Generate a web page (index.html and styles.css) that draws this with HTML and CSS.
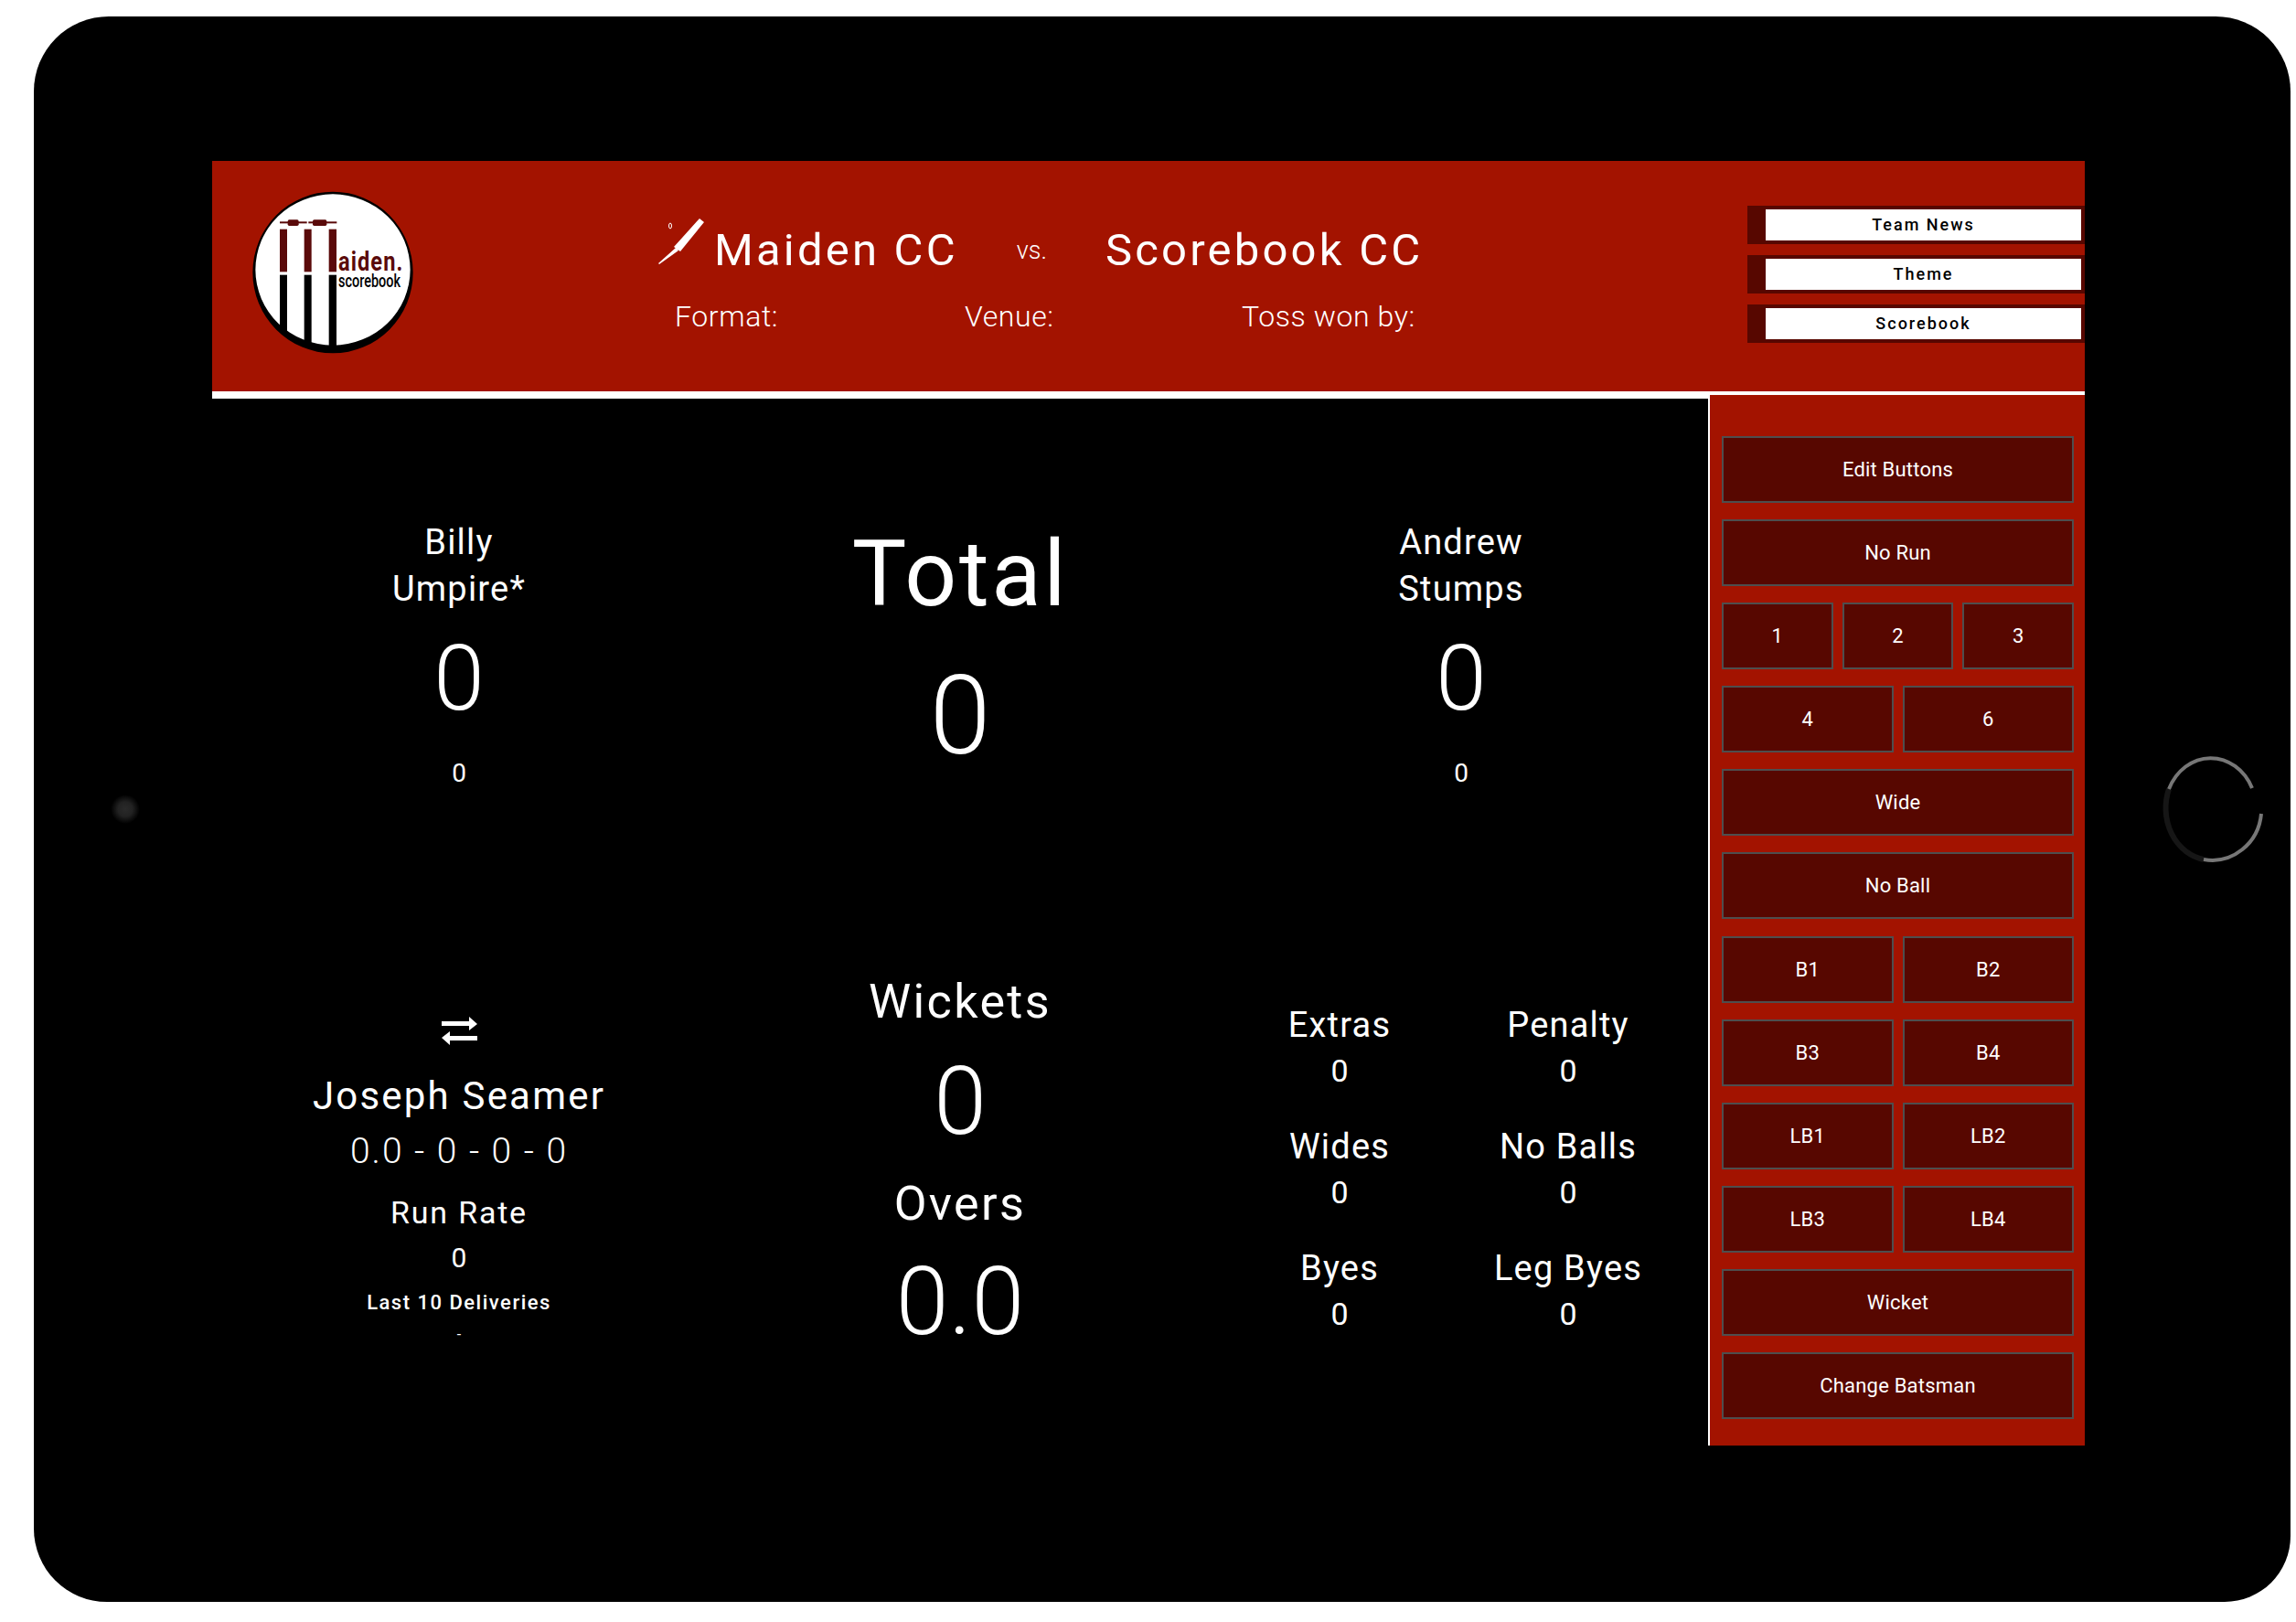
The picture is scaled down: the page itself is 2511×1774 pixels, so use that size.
FILE: index.html

```html
<!DOCTYPE HTML>
<html>
<head>
<meta charset="utf-8">
<title>Maiden Scorebook</title>
<link rel="stylesheet" href="styles.css">
</head>

<body>
<div class="tablet">
	<span class="camera"></span>
	<svg class="home" width="120" height="120" viewBox="0 0 120 120">
		<path class="home-faint" d="M14 36 A50 57 0 0 0 52 113" />
		<path d="M14 36 A50 57 0 0 1 105 35" />
		<path d="M52 113 A54 56 0 0 0 115 63" />
	</svg>

	<div class="app">
		<header class="top">
			<!-- logo -->
			<svg class="logo" width="176" height="178" viewBox="48 30 524 534">
				<circle cx="310" cy="294" r="258" fill="#fff" />
				<path d="M310 32 A260 262 0 0 1 310 562 A260 262 0 0 1 310 32 Z M310 40 A254 248 0 0 0 310 536 A254 248 0 0 0 310 40 Z" fill="#000" fill-rule="evenodd" />
				<g fill="#5a0a0a">
					<rect x="136" y="155" width="24" height="140" />
					<rect x="216" y="155" width="24" height="140" />
					<rect x="297" y="155" width="25" height="140" />
					<rect x="136" y="130" width="89" height="6" />
					<rect x="230" y="130" width="93" height="6" />
					<rect x="162" y="124" width="36" height="20" rx="5" />
					<rect x="244" y="124" width="46" height="20" rx="5" />
				</g>
				<g fill="#000">
					<rect x="136" y="305" width="24" height="190" />
					<rect x="216" y="305" width="24" height="235" />
					<rect x="297" y="305" width="25" height="245" />
				</g>
				<text x="328" y="292" textLength="214" lengthAdjust="spacingAndGlyphs" class="logo-name">aiden.</text>
				<text x="328" y="344" textLength="204" lengthAdjust="spacingAndGlyphs" class="logo-sub">scorebook</text>
			</svg>

			<div class="match">
				<div class="teams">
					<svg class="bat" width="50" height="50" viewBox="0 0 50 50">
						<path d="M45 0 L50 4 L24 36 L17 31 Z M19 32 L22 35 L1 50 L0 49 Z" fill="#fff" />
						<ellipse cx="13" cy="8" rx="1.5" ry="3" fill="none" stroke="#fff" stroke-width="1" />
					</svg>
					<span class="team">Maiden CC</span>
					<span class="versus">vs.</span>
					<span class="team">Scorebook CC</span>
				</div>
				<div class="meta">
					<span class="meta-format">Format:</span>
					<span class="meta-venue">Venue:</span>
					<span>Toss won by:</span>
				</div>
			</div>

			<div class="links">
				<a class="link">Team News</a>
				<a class="link">Theme</a>
				<a class="link">Scorebook</a>
			</div>
		</header>

		<div class="body">
			<main class="board">
				<section class="cell batter">
					<div class="batter-name">Billy<br>Umpire*</div>
					<div class="batter-runs">0</div>
					<div class="batter-balls">0</div>
				</section>
				<section class="cell total">
					<div class="total-label">Total</div>
					<div class="total-num">0</div>
				</section>
				<section class="cell batter">
					<div class="batter-name">Andrew<br>Stumps</div>
					<div class="batter-runs">0</div>
					<div class="batter-balls">0</div>
				</section>

				<section class="cell bowler">
					<svg class="swap" width="39" height="31" viewBox="0 0 39 31">
						<path d="M0 5 H30 V0 L39 8 L30 15 V10 H0 Z" fill="#fff" />
						<path d="M39 21 H9 V16 L0 23 L9 31 V26 H39 Z" fill="#fff" />
					</svg>
					<div class="bowler-name">Joseph Seamer</div>
					<div class="bowler-figs">0.0 - 0 - 0 - 0</div>
					<div class="rate-label">Run Rate</div>
					<div class="rate-num">0</div>
					<div class="last-label">Last 10 Deliveries</div>
					<div class="last-list">-</div>
				</section>
				<section class="cell innings">
					<div class="innings-label">Wickets</div>
					<div class="innings-num">0</div>
					<div class="innings-label overs">Overs</div>
					<div class="innings-num overs-num">0.0</div>
				</section>
				<section class="cell extras">
					<div class="extra"><div class="extra-label">Extras</div><div class="extra-num">0</div></div>
					<div class="extra"><div class="extra-label">Penalty</div><div class="extra-num">0</div></div>
					<div class="extra"><div class="extra-label">Wides</div><div class="extra-num">0</div></div>
					<div class="extra"><div class="extra-label">No Balls</div><div class="extra-num">0</div></div>
					<div class="extra"><div class="extra-label">Byes</div><div class="extra-num">0</div></div>
					<div class="extra"><div class="extra-label">Leg Byes</div><div class="extra-num">0</div></div>
				</section>
			</main>

			<aside class="pad">
				<div class="pad-row"><button class="key">Edit Buttons</button></div>
				<div class="pad-row"><button class="key">No Run</button></div>
				<div class="pad-row"><button class="key">1</button><button class="key">2</button><button class="key">3</button></div>
				<div class="pad-row"><button class="key">4</button><button class="key">6</button></div>
				<div class="pad-row"><button class="key">Wide</button></div>
				<div class="pad-row"><button class="key">No Ball</button></div>
				<div class="pad-row"><button class="key">B1</button><button class="key">B2</button></div>
				<div class="pad-row"><button class="key">B3</button><button class="key">B4</button></div>
				<div class="pad-row"><button class="key">LB1</button><button class="key">LB2</button></div>
				<div class="pad-row"><button class="key">LB3</button><button class="key">LB4</button></div>
				<div class="pad-row"><button class="key">Wicket</button></div>
				<div class="pad-row"><button class="key">Change Batsman</button></div>
			</aside>
		</div>
	</div>
</div>
</body>
</html>
```

FILE: styles.css

```css
* {margin:0; padding:0; box-sizing:border-box;}
html, body {background:#fff;}
body {font-family:Roboto, "Liberation Sans", sans-serif; color:#fff;}

.tablet {position:relative; width:2468px; height:1734px; margin:18px 0 0 37px; padding:158px 0 0 195px; background:#000; border-radius:82px 82px 72px 80px;}
.camera {position:absolute; left:84px; top:851px; width:32px; height:32px; border-radius:50%; background:radial-gradient(circle, #2a2a2a 0, #222 35%, #000 70%);}
.home {position:absolute; left:2321px; top:809px; fill:none; stroke:#777; stroke-width:4;}
.home-faint {stroke:#161616; stroke-width:6;}

.app {width:2048px; height:1405px; display:flex; flex-direction:column;}

/* header */
.top {height:256px; display:flex; align-items:center; padding:0 0 10px 44px; background:#a31300; border-bottom:4px solid #fff;}
.logo {flex:none; margin-top:2px;}
.logo-name {font-size:90px; font-weight:700; letter-spacing:4px; fill:#5a0a0a;}
.logo-sub {font-size:58px; font-weight:500; fill:#000;}
.match {margin-left:268px; margin-top:16px;}
.teams {display:flex; align-items:center; height:60px;}
.bat {flex:none; margin:-20px 11px 0 0;}
.team {font-size:49px; font-weight:400; letter-spacing:3.2px; line-height:60px;}
.versus {font-size:27px; font-weight:300; margin:0 64px 0 64px;}
.meta {display:flex; margin-top:22px; padding-left:18px; font-size:32px; font-weight:300; letter-spacing:.6px; line-height:40px;}
.meta-format {width:317px;}
.meta-venue {width:303px;}

.links {margin-left:auto; margin-top:6px; display:flex; flex-direction:column; gap:12px;}
.link {display:block; width:369px; height:42px; line-height:34px; background:#fff; color:#000; border:4px solid #570700; border-left-width:20px; font-size:18px; font-weight:500; letter-spacing:2px; text-align:center;}

/* main area */
.body {flex:1; display:flex; min-height:0;}
.board {flex:1; display:grid; grid-template-columns:repeat(3, 540px); grid-template-rows:474px auto; column-gap:8px; padding-top:132px; border-top:4px solid #fff; text-align:center;}

.batter-name {font-size:38px; line-height:51px; letter-spacing:1.2px;}
.batter-runs {margin-top:17px; font-size:100px; font-weight:300; line-height:110px;}
.batter-balls {margin-top:29px; font-size:28px; font-weight:400; line-height:40px;}

.total-label {font-size:100px; font-weight:400; line-height:120px; letter-spacing:2.6px;}
.total-num {margin-top:30px; font-size:120px; font-weight:300; line-height:130px;}

.swap {display:block; margin:70px auto 0;}
.bowler-name {margin-top:31px; font-size:42px; line-height:50px; letter-spacing:2.2px; font-weight:400;}
.bowler-figs {margin-top:10px; font-size:39px; line-height:50px; font-weight:300; letter-spacing:2px;}
.rate-label {margin-top:22px; font-size:34px; line-height:40px; letter-spacing:1.8px;}
.rate-num {margin-top:10px; font-size:30px; line-height:40px; font-weight:400;}
.last-label {margin-top:14px; font-size:22px; font-weight:500; line-height:30px; letter-spacing:1.5px;}
.last-list {margin-top:8px; font-size:16px; line-height:24px;}

.innings-label {margin-top:24px; font-size:52px; font-weight:400; line-height:60px; letter-spacing:2.4px;}
.innings-num {margin-top:24px; font-size:104px; font-weight:300; line-height:110px;}
.overs {margin-top:27px;}
.overs-num {margin-top:22px;}

.extras {display:grid; grid-template-columns:repeat(2, 250px); grid-auto-rows:133px; justify-content:center; padding:56px 16px 0 0;}
.extra-label {font-size:38px; line-height:46px; letter-spacing:1.2px;}
.extra-num {margin-top:7px; font-size:34px; font-weight:400; line-height:40px;}

/* scoring buttons */
.pad {flex:none; width:412px; display:flex; flex-direction:column; gap:18.1px; padding:45px 12px 0 13px; background:#a31300; border-left:2px solid #fff;}
.pad-row {display:flex; gap:10px; height:73px;}
.key {flex:1; min-width:0; background:#570700; border:2px solid #4e4e4e; color:#fff; font-family:inherit; font-size:22px; letter-spacing:.2px;}
```
